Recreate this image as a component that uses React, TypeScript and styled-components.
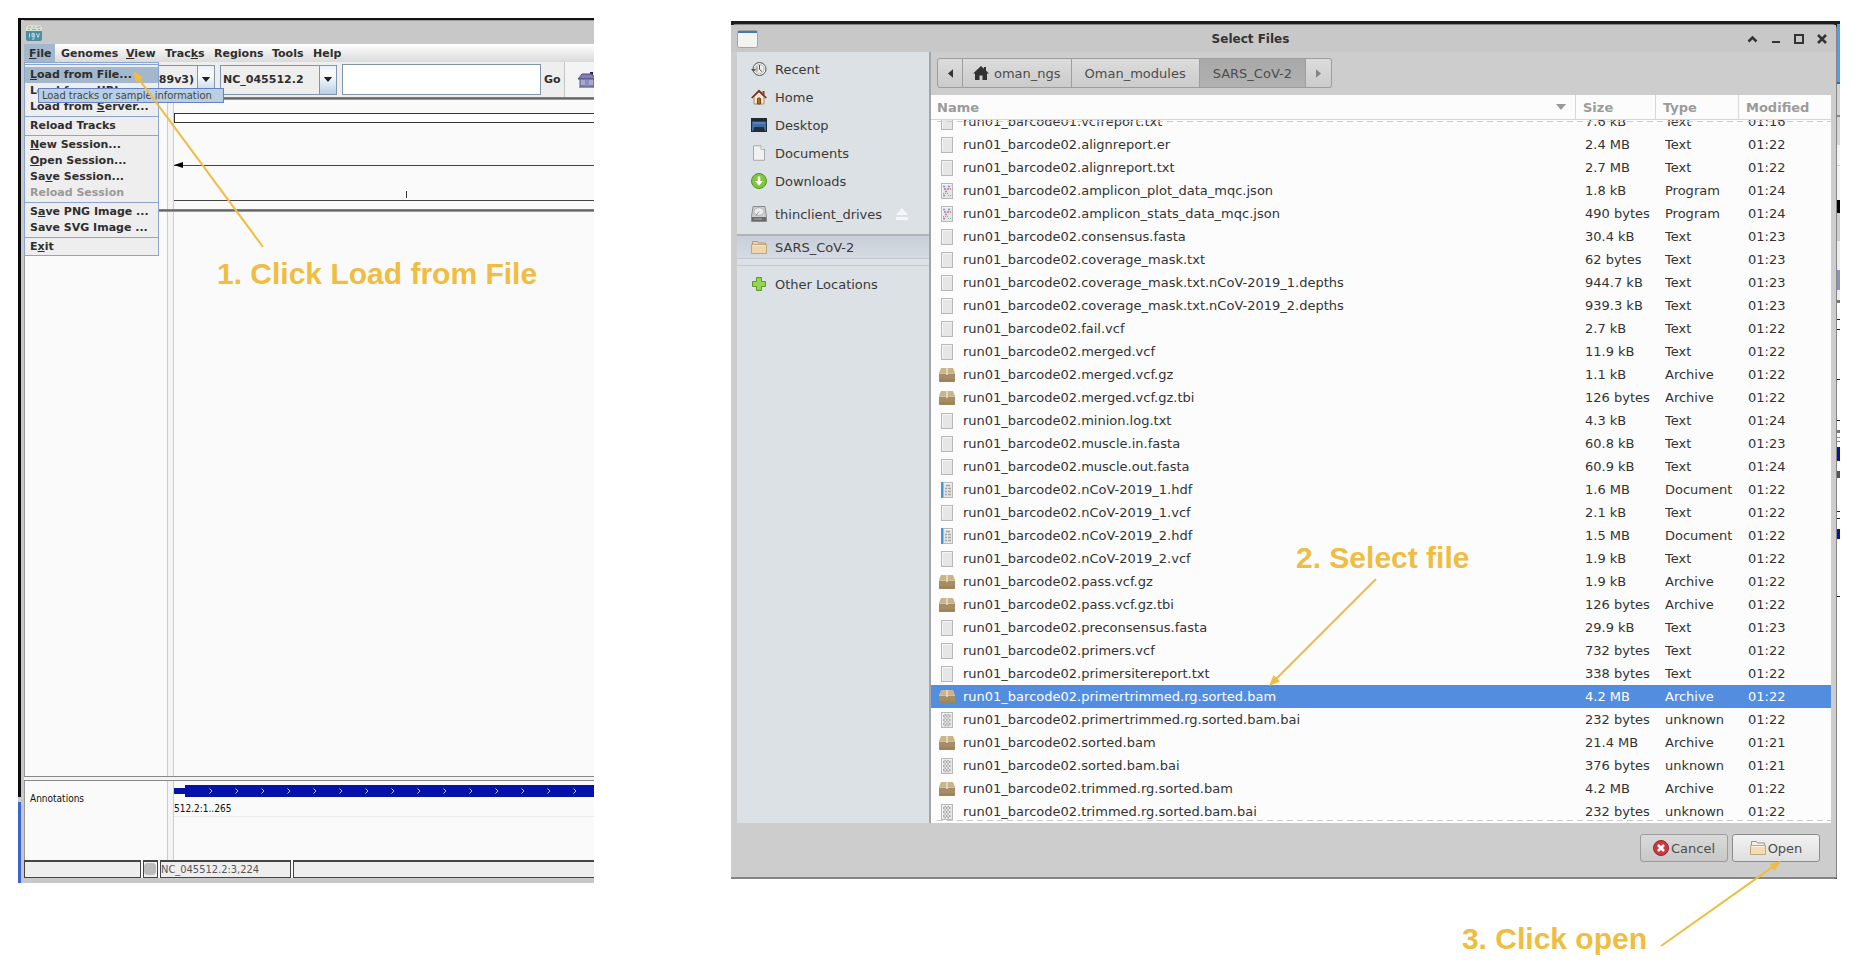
import React from "react";
import styled, { createGlobalStyle } from "styled-components";

const Global = createGlobalStyle`
  *, *::before, *::after { box-sizing: border-box; }
  body { margin: 0; background: #fff; }
  button, input, select { font: inherit; color: inherit; margin: 0; }
`;

const ui = `"DejaVu Sans", "Liberation Sans", sans-serif`;
const uiNarrow = `"DejaVu Sans Condensed", "DejaVu Sans", sans-serif`;
const accent = "#efbd41";

/* ---------- page ---------- */

const Page = styled.main`
  display: grid;
  grid-template-columns: minmax(0, 576fr) minmax(0, 1109fr);
  column-gap: 137px;
  align-items: start;
  padding: 18px 20px 81px 18px;
  font-family: ${ui};
`;

const Shot = styled.section<{ $drop?: number }>`
  position: relative;
  display: flex;
  margin-top: ${(p) => p.$drop ?? 0}px;
`;

const Callout = styled.p`
  position: absolute;
  margin: 0;
  font: bold 30px/34px "Liberation Sans", Arial, sans-serif;
  color: ${accent};
  white-space: nowrap;
  z-index: 5;
`;
const LoadCallout = styled(Callout)`
  left: 199px;
  top: 239px;
`;
const SelectCallout = styled(Callout)`
  left: 565px;
  top: 520px;
`;
const OpenCallout = styled(Callout)`
  right: 193px;
  top: 901px;
`;

const ArrowSvg = styled.svg`
  position: absolute;
  z-index: 6;
  pointer-events: none;
  overflow: visible;
`;
const LoadArrow = styled(ArrowSvg)`
  left: 114px;
  top: 52px;
`;
const SelectArrow = styled(ArrowSvg)`
  left: 538px;
  top: 558px;
`;
const OpenArrow = styled(ArrowSvg)`
  right: 59px;
  top: 840px;
`;

/* Line from (x1,y1) with a filled head whose tip is at (x2,y2). */
function ArrowShape({ x1, y1, x2, y2 }: { x1: number; y1: number; x2: number; y2: number }) {
  const a = (Math.atan2(y2 - y1, x2 - x1) * 180) / Math.PI;
  return (
    <g>
      <line x1={x1} y1={y1} x2={x2 - (x2 - x1) * 0.04} y2={y2 - (y2 - y1) * 0.04} stroke={accent} strokeWidth="2" />
      <path d="M0 0L-11 4.500V-4.500Z" fill={accent} transform={`translate(${x2} ${y2}) rotate(${a})`} />
    </g>
  );
}

/* ---------- genome viewer window ---------- */

const DesktopEdge = styled.div`
  flex: 0 0 3px;
  background: linear-gradient(#0a0a0a 779px, #ccc 779px, #ccc 784px, #3a66d0 784px);
`;

const Viewer = styled.div`
  flex: 1;
  min-width: 0;
  display: flex;
  flex-direction: column;
  border-top: 2px solid #111;
  background: #c8c8c8;
  padding: 0 0 5px 3px;
`;

const ViewerTitle = styled.div`
  height: 24px;
  display: flex;
  align-items: center;
  padding: 0 2px;
  border-top: 1px solid #9a9a9a;
`;

const MenuBar = styled.nav`
  height: 18px;
  display: flex;
  background: linear-gradient(#fff, #dadada);
  font-size: 11px;
  font-weight: bold;
  color: #2e2e2e;
`;

const MenuSlot = styled.div<{ $w: number }>`
  position: relative;
  flex: 0 0 ${(p) => p.$w}px;
`;

const MenuTitle = styled.button<{ $open?: boolean }>`
  display: block;
  height: 18px;
  width: ${(p) => (p.$open ? "31px" : "auto")};
  border: 0;
  padding: 0 0 0 5px;
  text-align: left;
  white-space: nowrap;
  background: ${(p) => (p.$open ? "#a3b8cc" : "transparent")};
`;

const Menu = styled.div`
  position: absolute;
  left: 0;
  top: 18px;
  width: 135px;
  z-index: 3;
  border: 1px solid #8ba4d6;
  background: #eee;
  padding-top: 1px;
  &::before {
    content: "";
    display: block;
    border-top: 1px solid #8ba4d6;
    margin-bottom: 2px;
  }
`;

const MenuGroup = styled.div`
  & + & {
    padding-top: 1px;
    margin-top: 1px;
    border-top: 1px solid #8ba4d6;
  }
`;

const MenuItem = styled.button<{ $active?: boolean }>`
  position: relative;
  display: block;
  width: 100%;
  height: 16px;
  line-height: 16px;
  padding: 0 0 0 5px;
  border: 0;
  text-align: left;
  white-space: nowrap;
  background: ${(p) => (p.$active ? "#a3b8cc" : "transparent")};
  &:disabled {
    color: #999;
  }
`;

const Tip = styled.span`
  position: absolute;
  z-index: 4;
  left: 13px;
  top: 21px;
  width: 186px;
  height: 15px;
  padding-left: 3px;
  border: 1px solid #6382bf;
  background: #b8cfe5;
  font: normal 11px/13px ${uiNarrow};
  color: #444;
  white-space: nowrap;
`;

const Toolbar = styled.div`
  height: 35px;
  display: flex;
  align-items: center;
  gap: 5px;
  background: #eee;
  font-size: 11px;
  font-weight: bold;
  color: #2e2e2e;
  overflow: hidden;
`;

const Combo = styled.div<{ $w: number }>`
  flex: 0 0 ${(p) => p.$w}px;
  height: 30px;
  display: flex;
  border: 1px solid #8296ab;
`;

const ComboSelect = styled.select<{ $end?: boolean }>`
  appearance: none;
  flex: 1;
  min-width: 0;
  border: 0;
  background: #eee;
  padding: 0 3px 0 2px;
  text-align-last: ${(p) => (p.$end ? "right" : "left")};
`;

const ComboArrow = styled.span`
  flex: 0 0 17px;
  display: grid;
  place-items: center;
  border-left: 1px solid #8296ab;
  background: linear-gradient(#e8f0f8, #fff 30%, #b8cfe5);
`;

const Locus = styled.input`
  flex: 0 0 199px;
  height: 31px;
  border: 1px solid #8296ab;
  background: #fff;
`;

const GoButton = styled.button`
  flex: 0 0 20px;
  border: 0;
  padding: 0;
  margin: 0 -5px 0 -2px;
  background: none;
  text-align: left;
`;

const HomeCell = styled.button`
  flex: 1;
  height: 35px;
  border: 0;
  border-left: 1px solid #c4c4c4;
  padding: 0 0 0 12px;
  display: flex;
  align-items: center;
  background: #f4f4f4;
`;

const Splitter = styled.div`
  height: 3px;
  background: linear-gradient(#999, #666 1px, #666 2px, #999 2px);
`;

const SoftSplitter = styled.div`
  height: 5px;
  background: #f4f4f4;
  border-top: 1px solid #888;
  border-bottom: 1px solid #888;
`;

const Tracks = styled.div<{ $h: number }>`
  height: ${(p) => p.$h}px;
  display: flex;
  background: #fafafa;
  border-left: 1px solid #999;
`;

const TrackNames = styled.div`
  flex: 0 0 143px;
  border-right: 1px solid #ccc;
  padding: 11px 0 0 5px;
  font: 10px/14px ${uiNarrow};
  color: #111;
`;

const Gutter = styled.div`
  flex: 0 0 5px;
  background: #f4f4f4;
`;

const TrackData = styled.div`
  flex: 1;
  min-width: 0;
  border-left: 1px solid #ccc;
  overflow: hidden;
  & > svg {
    display: block;
  }
`;

const FeatureLabel = styled.div`
  font: 10px/14px ${uiNarrow};
  color: #111;
  height: 20px;
  padding-top: 5px;
  border-bottom: 1px solid #ececec;
`;

const StatusBar = styled.div`
  height: 18px;
  display: flex;
  gap: 2px;
  background: #fafafa;
`;

const StatusCell = styled.div<{ $w?: number }>`
  flex: ${(p) => (p.$w ? `0 0 ${p.$w}px` : "1")};
  border: 1px solid #444;
  border-top-width: 2px;
  border-right-width: ${(p) => (p.$w ? 1 : 0)}px;
  background: #eee;
  font: 11px/15px ${uiNarrow};
  color: #555;
  overflow: hidden;
`;

const Lamp = styled.span`
  display: block;
  width: 12px;
  height: 12px;
  margin-top: 1px;
  border-radius: 4px;
  background: #bbb;
`;

/* ---------- file dialog ---------- */

const Dialog = styled.div`
  flex: 1;
  min-width: 0;
  display: flex;
  flex-direction: column;
  border: solid #858585;
  border-width: 1px 1px 2px 0;
  border-radius: 5px 5px 2px 0;
  background: #cdcdcd;
  color: #3a3a3a;
  font-size: 13px;
`;

const DialogColumn = styled.div`
  flex: 1;
  min-width: 0;
  display: flex;
  flex-direction: column;
`;

const ShotBody = styled.div`
  flex: 1;
  min-width: 0;
  display: flex;
  border-top: 3px solid #1c1f1c;
  background: #1c1f1c;
`;

const line = (y: number, h: number, c: string) => `transparent ${y}px, ${c} ${y}px, ${c} ${y + h}px, transparent ${y + h}px`;

const BehindEdge = styled.div`
  flex: 0 0 3px;
  background: linear-gradient(
      ${[
        line(58, 2, "#2f6fae"),
        line(91, 2, "#888"),
        line(141, 1, "#ccc"),
        line(176, 13, "#000"),
        line(246, 20, "#8d90c4"),
        line(276, 3, "#777"),
        line(295, 1, "#222"),
        line(305, 1, "#222"),
        line(355, 1, "#222"),
        line(396, 1, "#222"),
        line(406, 3, "#777"),
        line(413, 1, "#888"),
        line(417, 1, "#888"),
        line(423, 14, "#0514a8"),
        line(447, 7, "#555"),
        line(487, 1, "#222"),
        line(494, 1, "#222"),
        line(505, 10, "#0514a8"),
        line(572, 1, "#222"),
      ].join(", ")}
    ),
    linear-gradient(#4a9ff2 60px, #d2d2d2 60px, #d8d8d8 121px, #f4f4f4 121px, #f4f4f4 176px, #cfcfcf 176px, #cfcfcf 217px, #eee 217px, #eee 276px, #fff 276px);
`;

const DialogTitle = styled.header`
  height: 27px;
  display: flex;
  align-items: center;
  padding: 0 3px 0 6px;
  background: #c8c8c8;
`;

const TitleText = styled.h1`
  flex: 1;
  margin: 0;
  padding-left: 2px;
  text-align: center;
  font-size: 12px;
  line-height: 16px;
  color: #333;
`;

const WindowButton = styled.button`
  width: 23px;
  height: 24px;
  padding: 0;
  border: 0;
  background: none;
  display: grid;
  place-items: center;
`;

const DialogBody = styled.div`
  display: flex;
  padding: 0 5px 0 6px;
`;

const Places = styled.nav`
  flex: 0 0 194px;
  padding-top: 3px;
  background: #dce1e5;
  border-right: 2px solid #a3a6a8;
`;

const PlaceGroup = styled.div<{ $kind?: "drive" | "mark" }>`
  padding: ${(p) => (p.$kind === "drive" ? "5px 0 6px" : "0")};
  ${(p) =>
    p.$kind === "mark" &&
    `border-top: 2px solid #b0b3b8;
     border-bottom: 1px solid #c3c8cf;
     background: linear-gradient(#c8cfd9, #d5dbe3);
     height: 25px;
     display: flex;
     align-items: center;`}
`;

const PlaceGap = styled.div`
  height: 7px;
  border-bottom: 1px solid #c3c8cf;
  margin-bottom: 4px;
`;

const Place = styled.button`
  width: 100%;
  height: 28px;
  display: flex;
  align-items: center;
  gap: 8px;
  padding: 0 20px 0 14px;
  border: 0;
  background: none;
  text-align: left;
  white-space: nowrap;
`;

const PlaceLabel = styled.span`
  flex: 1;
`;

const Files = styled.div`
  flex: 1;
  min-width: 0;
  display: flex;
  flex-direction: column;
`;

const PathRow = styled.div`
  height: 43px;
  display: flex;
  padding: 6px 6px 7px;
`;

const PathButton = styled.button<{ $current?: boolean; $home?: boolean; $end?: "left" | "right" }>`
  display: flex;
  align-items: center;
  justify-content: center;
  gap: 5px;
  width: ${(p) => (p.$end ? "26px" : "auto")};
  padding: 0 ${(p) => (p.$end ? 0 : p.$home ? 10 : 13)}px;
  border: 1px solid #9d9d9d;
  border-left-width: ${(p) => (p.$end === "left" ? 1 : 0)}px;
  border-radius: ${(p) => (p.$end === "left" ? "3px 0 0 3px" : p.$end === "right" ? "0 3px 3px 0" : "0")};
  background: ${(p) => (p.$current ? "linear-gradient(#a8a8a8, #b2b2b2)" : "linear-gradient(#dcdcdc, #cbcbcb)")};
  color: #4c4c4c;
  white-space: nowrap;
`;

const List = styled.div`
  position: relative;
  background: #fcfcfc;
  &::before,
  &::after {
    content: "";
    position: absolute;
    left: 6px;
    right: 0;
    height: 1px;
    background: repeating-linear-gradient(90deg, #ccc 0, #ccc 6px, transparent 6px, transparent 10px);
  }
  &::before {
    top: 26px;
  }
  &::after {
    bottom: 2px;
  }
`;

const Table = styled.table`
  width: 100%;
  table-layout: fixed;
  border-collapse: separate;
  border-spacing: 0;
`;

const Col = styled.col<{ $w?: number }>`
  width: ${(p) => (p.$w ? `${p.$w}px` : "auto")};
`;

const Th = styled.th`
  height: 25px;
  padding: 0 0 0 6px;
  text-align: left;
  line-height: 23px;
  color: #9b9b9b;
  border-bottom: 1px solid #d4d4d4;
  & + & {
    padding-left: 7px;
    border-left: 1px solid #d8d8d8;
  }
`;

const ThInner = styled.span`
  display: flex;
  align-items: center;
  justify-content: space-between;
  padding-right: 9px;
`;

const Row = styled.tr<{ $selected?: boolean }>`
  background: ${(p) => (p.$selected ? "#528de0" : "transparent")};
  color: ${(p) => (p.$selected ? "#fff" : "#333")};
`;

const Td = styled.td`
  padding: 0 0 0 8px;
  white-space: nowrap;
  & + & {
    padding-left: 10px;
  }
`;

/* A row partly scrolled under the header shows only its lower part. */
const Cell = styled.div<{ $cut?: boolean }>`
  height: ${(p) => (p.$cut ? 13 : 23)}px;
  display: flex;
  align-items: flex-end;
  overflow: hidden;
`;

const CellLine = styled.div`
  flex: 1;
  height: 23px;
  display: flex;
  align-items: center;
  gap: 8px;
`;

const Footer = styled.footer`
  height: 54px;
  display: flex;
  justify-content: flex-end;
  align-items: flex-start;
  gap: 4px;
  padding: 11px 16px 0 0;
`;

const ActionButton = styled.button<{ $primary?: boolean }>`
  width: 88px;
  height: 28px;
  display: flex;
  align-items: center;
  justify-content: center;
  gap: 2px;
  padding: 0;
  border: 1px solid ${(p) => (p.$primary ? "#8c8c8c" : "#9d9d9d")};
  border-radius: 3px;
  background: ${(p) => (p.$primary ? "linear-gradient(#f2f2f2, #dedede)" : "linear-gradient(#dadada, #c8c8c8)")};
  color: #4c4c4c;
`;

/* ---------- icons ---------- */

const ViewerLogo = () => (
  <svg width="16" height="16" viewBox="0 0 16 16" aria-hidden="true">
    <rect width="16" height="16" rx="2" fill="#4d8ea3" />
    <path d="M0 2q0-2 2-2h12q2 0 2 2v4H0z" fill="#d3e0dc" />
    <path d="M2 2h3M7 2h2M11 2h3" stroke="#d8a05e" />
    <path d="M2 4.500h2M6 4.500h4M12 4.500h2" stroke="#8bbcab" />
    <path d="M3.500 8.500v4M8 8.500H6v3h2v-3V14H6M10.500 8.500l1.500 4 1.500-4" stroke="#c4dde6" fill="none" />
  </svg>
);

const HouseIcon = () => (
  <svg width="20" height="17" viewBox="0 0 20 17" aria-hidden="true">
    <path d="M13 1h3v5h-3z" fill="#22204a" />
    <path d="M1 8L5 3h10l4 5z" fill="#8280b4" stroke="#4a4880" />
    <path d="M3 8h14v7H3z" fill="#a7a6d2" stroke="#55538c" />
    <path d="M8 9h4v6H8z" fill="#8d8bc0" />
    <path d="M2 16h16" stroke="#3f3d70" />
  </svg>
);

const Down = ({ w, h, c }: { w: number; h: number; c: string }) => (
  <svg width={w} height={h} viewBox="0 0 10 6" aria-hidden="true">
    <path d="M0 0h10L5 6z" fill={c} />
  </svg>
);

const Svg16 = ({ children }: { children: React.ReactNode }) => (
  <svg width="16" height="16" viewBox="0 0 16 16" fill="none" aria-hidden="true">
    {children}
  </svg>
);

const FolderIcon = () => (
  <Svg16>
    <path d="M1.500 13V1.500h5L7.500 3h7v10z" fill="#f4f1ea" stroke="#98928a" />
    <path d="M.5 5.500h15v9H.5z" fill="#f2dcb3" stroke="#bfa67b" />
    <path d="M1.500 6.500h13" stroke="#fdf5e2" />
  </Svg16>
);

const placeIcons: Record<string, React.ReactNode> = {
  recent: (
    <Svg16>
      <circle cx="8.500" cy="8" r="6.500" fill="#efefec" stroke="#555" />
      <circle cx="8.500" cy="8" r="4.500" stroke="#bbb" />
      <path d="M8.500 4v4.500l2.500 2" stroke="#555" />
      <path d="M0 8h5L2.500 11z" fill="#555" />
      <path d="M6 5.500v5" stroke="#777" />
    </Svg16>
  ),
  home: (
    <Svg16>
      <path d="M3 7.500L8 3l5 4.500V15H3z" fill="#f3e6cf" stroke="#a7906c" />
      <path d="M11.500 2h2v4l-2-2z" fill="#8a3a2a" />
      <path d="M.7 9L8 1.800 15.300 9" stroke="#7c2f22" strokeWidth="1.700" />
      <path d="M6.500 15V9.500q1.500-1.300 3 0V15z" fill="#b0662c" stroke="#7a4418" />
    </Svg16>
  ),
  desktop: (
    <Svg16>
      <rect x=".5" y="1.500" width="15" height="13" fill="#3c6ea5" stroke="#1c2c3c" />
      <path d="M1 2h14v2.500H1z" fill="#22272c" />
      <path d="M3.500 10h9l1.500 4H2z" fill="#23303c" />
      <path d="M2 6h12" stroke="#6f9ccb" />
    </Svg16>
  ),
  documents: (
    <Svg16>
      <path d="M2.500.8h7.500l3.500 3.500v11h-11z" fill="#f1f1f1" stroke="#a9a9a9" />
      <path d="M10 .8v3.500h3.500" fill="#fff" stroke="#a9a9a9" />
    </Svg16>
  ),
  downloads: (
    <Svg16>
      <circle cx="8" cy="8" r="7.500" fill="#82c541" stroke="#569423" />
      <path d="M6.700 3.500h2.600V8H12l-4 4.500L4 8h2.700z" fill="#fff" />
    </Svg16>
  ),
  drive: (
    <Svg16>
      <path d="M2 .5h12l1.500 10v5H.5v-5z" fill="#cfcfcf" stroke="#8a8a8a" />
      <ellipse cx="8" cy="5.500" rx="5" ry="3.800" fill="#ececec" stroke="#b2b2b2" />
      <path d="M4.500 10L8 5.500" stroke="#999" />
      <rect x="1" y="11" width="14" height="4" fill="#6a6a6a" />
      <path d="M3 13h8" stroke="#aaa" />
    </Svg16>
  ),
  folder: (
    <Svg16>
      <path d="M1.500 13V2.500h5L7.500 4h7v9z" fill="#e6d3b2" stroke="#b39b75" />
      <path d="M.5 5.500h15v9H.5z" fill="#eed5ab" stroke="#bfa67b" />
      <path d="M1.500 6.500h13" stroke="#f8e8cb" />
    </Svg16>
  ),
  plus: (
    <Svg16>
      <path d="M5.500 1.500h5v4h4v5h-4v4h-5v-4h-4v-5h4z" fill="#96d552" stroke="#5c9a28" />
    </Svg16>
  ),
};

const SheetBase = ({ children }: { children?: React.ReactNode }) => (
  <Svg16>
    <rect x="2.500" y=".5" width="11" height="15" fill="#e6e6e6" stroke="#b8b8b8" />
    <path d="M3.500 14V1.500h9" stroke="#f6f6f6" />
    {children}
  </Svg16>
);

const fileIcons: Record<string, React.ReactNode> = {
  Text: <SheetBase />,
  Program: (
    <SheetBase>
      <path d="M4 3.500h3M9 3.500h2M6 8.500h3" stroke="#6f9fd0" strokeWidth="1.500" strokeDasharray="2 1" />
      <path d="M5 6h2M8 6h4M4 12.500h3" stroke="#d06a90" strokeWidth="1.500" strokeDasharray="2 1" />
      <path d="M4 10.500h5M9 12.500h3" stroke="#7fae86" strokeDasharray="1 1" />
    </SheetBase>
  ),
  Document: (
    <SheetBase>
      <path d="M2 0h3v16H2z" fill="#4c93dc" />
      <path d="M4.500 0v16" stroke="#8fc0ee" />
      <path d="M7 3.500h4M6 6.500h2M9 6.500h3M6 9.500h2M9 9.500h3M6 12.500h2M9 12.500h3" stroke="#a5a5a5" strokeWidth="1.500" />
    </SheetBase>
  ),
  Archive: (
    <Svg16>
      <path d="M0 6h16v8q0 1-1 1H1q-1 0-1-1z" fill="#a78d65" />
      <path d="M0 12h16v2q0 1-1 1H1q-1 0-1-1z" fill="#97804f" opacity=".6" />
      <path d="M2 1h12l2 5H0z" fill="#c9b48c" />
      <path d="M0 6.500h16" stroke="#d3c19c" />
      <path d="M8 1v7" stroke="#ebe0c8" strokeWidth="1.500" />
    </Svg16>
  ),
  unknown: (
    <SheetBase>
      <path d="M4 4h8M4 8h8M4 12h8" stroke="#999" strokeWidth="1.500" strokeDasharray="1.500 1.500" />
      <path d="M5.500 2.500h6M5.500 6h6M5.500 10h6M5.500 13.500h6" stroke="#aaa" strokeWidth="1.500" strokeDasharray="1.500 1.500" />
    </SheetBase>
  ),
};

const Eject = () => (
  <svg width="14" height="12" viewBox="0 0 14 12" aria-hidden="true">
    <path d="M7 0l6 7H1z" fill="#f4f6f8" />
    <path d="M1 9h12v3H1z" fill="#f4f6f8" />
  </svg>
);

/* ---------- data ---------- */

type FileRow = [name: string, size: string, kind: string, time: string];

const files: FileRow[] = [
  ["run01_barcode01.vcfreport.txt", "7.6 kB", "Text", "01:16"],
  ["run01_barcode02.alignreport.er", "2.4 MB", "Text", "01:22"],
  ["run01_barcode02.alignreport.txt", "2.7 MB", "Text", "01:22"],
  ["run01_barcode02.amplicon_plot_data_mqc.json", "1.8 kB", "Program", "01:24"],
  ["run01_barcode02.amplicon_stats_data_mqc.json", "490 bytes", "Program", "01:24"],
  ["run01_barcode02.consensus.fasta", "30.4 kB", "Text", "01:23"],
  ["run01_barcode02.coverage_mask.txt", "62 bytes", "Text", "01:23"],
  ["run01_barcode02.coverage_mask.txt.nCoV-2019_1.depths", "944.7 kB", "Text", "01:23"],
  ["run01_barcode02.coverage_mask.txt.nCoV-2019_2.depths", "939.3 kB", "Text", "01:23"],
  ["run01_barcode02.fail.vcf", "2.7 kB", "Text", "01:22"],
  ["run01_barcode02.merged.vcf", "11.9 kB", "Text", "01:22"],
  ["run01_barcode02.merged.vcf.gz", "1.1 kB", "Archive", "01:22"],
  ["run01_barcode02.merged.vcf.gz.tbi", "126 bytes", "Archive", "01:22"],
  ["run01_barcode02.minion.log.txt", "4.3 kB", "Text", "01:24"],
  ["run01_barcode02.muscle.in.fasta", "60.8 kB", "Text", "01:23"],
  ["run01_barcode02.muscle.out.fasta", "60.9 kB", "Text", "01:24"],
  ["run01_barcode02.nCoV-2019_1.hdf", "1.6 MB", "Document", "01:22"],
  ["run01_barcode02.nCoV-2019_1.vcf", "2.1 kB", "Text", "01:22"],
  ["run01_barcode02.nCoV-2019_2.hdf", "1.5 MB", "Document", "01:22"],
  ["run01_barcode02.nCoV-2019_2.vcf", "1.9 kB", "Text", "01:22"],
  ["run01_barcode02.pass.vcf.gz", "1.9 kB", "Archive", "01:22"],
  ["run01_barcode02.pass.vcf.gz.tbi", "126 bytes", "Archive", "01:22"],
  ["run01_barcode02.preconsensus.fasta", "29.9 kB", "Text", "01:23"],
  ["run01_barcode02.primers.vcf", "732 bytes", "Text", "01:22"],
  ["run01_barcode02.primersitereport.txt", "338 bytes", "Text", "01:22"],
  ["run01_barcode02.primertrimmed.rg.sorted.bam", "4.2 MB", "Archive", "01:22"],
  ["run01_barcode02.primertrimmed.rg.sorted.bam.bai", "232 bytes", "unknown", "01:22"],
  ["run01_barcode02.sorted.bam", "21.4 MB", "Archive", "01:21"],
  ["run01_barcode02.sorted.bam.bai", "376 bytes", "unknown", "01:21"],
  ["run01_barcode02.trimmed.rg.sorted.bam", "4.2 MB", "Archive", "01:22"],
  ["run01_barcode02.trimmed.rg.sorted.bam.bai", "232 bytes", "unknown", "01:22"],
];
const selectedFile = "run01_barcode02.primertrimmed.rg.sorted.bam";

const places = [
  ["recent", "Recent"],
  ["home", "Home"],
  ["desktop", "Desktop"],
  ["documents", "Documents"],
  ["downloads", "Downloads"],
];

/* ---------- parts ---------- */

function FileMenu() {
  return (
    <Menu>
      <MenuGroup>
        <MenuItem $active>
          <u>L</u>oad from File...
          <Tip role="tooltip">Load tracks or sample information</Tip>
        </MenuItem>
        <MenuItem>Load from URL...</MenuItem>
        <MenuItem>
          Load from <u>S</u>erver...
        </MenuItem>
      </MenuGroup>
      <MenuGroup>
        <MenuItem>Reload Tracks</MenuItem>
      </MenuGroup>
      <MenuGroup>
        <MenuItem>
          <u>N</u>ew Session...
        </MenuItem>
        <MenuItem>
          <u>O</u>pen Session...
        </MenuItem>
        <MenuItem>
          Sa<u>v</u>e Session...
        </MenuItem>
        <MenuItem disabled>Reload Session</MenuItem>
      </MenuGroup>
      <MenuGroup>
        <MenuItem>
          S<u>a</u>ve PNG Image ...
        </MenuItem>
        <MenuItem>Save SVG Image ...</MenuItem>
      </MenuGroup>
      <MenuGroup>
        <MenuItem>
          E<u>x</u>it
        </MenuItem>
      </MenuGroup>
    </Menu>
  );
}

function GenomeViewer() {
  return (
    <Viewer>
      <ViewerTitle>
        <ViewerLogo />
      </ViewerTitle>
      <MenuBar>
        <MenuSlot $w={32}>
          <MenuTitle $open>
            <u>F</u>ile
          </MenuTitle>
          <FileMenu />
        </MenuSlot>
        <MenuSlot $w={65}>
          <MenuTitle>Genomes</MenuTitle>
        </MenuSlot>
        <MenuSlot $w={39}>
          <MenuTitle>
            <u>V</u>iew
          </MenuTitle>
        </MenuSlot>
        <MenuSlot $w={49}>
          <MenuTitle>
            Trac<u>k</u>s
          </MenuTitle>
        </MenuSlot>
        <MenuSlot $w={58}>
          <MenuTitle>Regions</MenuTitle>
        </MenuSlot>
        <MenuSlot $w={41}>
          <MenuTitle>Tools</MenuTitle>
        </MenuSlot>
        <MenuSlot $w={40}>
          <MenuTitle>Help</MenuTitle>
        </MenuSlot>
      </MenuBar>
      <Toolbar>
        <Combo $w={191}>
          <ComboSelect $end aria-label="Genome">
            <option>(ASM985889v3)</option>
          </ComboSelect>
          <ComboArrow>
            <Down w={10} h={5} c="#222" />
          </ComboArrow>
        </Combo>
        <Combo $w={117}>
          <ComboSelect aria-label="Chromosome">
            <option>NC_045512.2</option>
          </ComboSelect>
          <ComboArrow>
            <Down w={10} h={5} c="#222" />
          </ComboArrow>
        </Combo>
        <Locus aria-label="Locus" />
        <GoButton>Go</GoButton>
        <HomeCell aria-label="Whole genome">
          <HouseIcon />
        </HomeCell>
      </Toolbar>
      <Splitter />
      <Tracks $h={109}>
        <TrackNames />
        <Gutter />
        <TrackData>
          <svg width="100%" height="109" shapeRendering="crispEdges" aria-hidden="true">
            <rect x="0" y="13" width="110%" height="9" fill="#fff" stroke="#333" />
            <line x1="0" y1="65" x2="100%" y2="65" stroke="#444" />
            <path d="M0 65l9-3v6z" fill="#000" shapeRendering="auto" />
            <line x1="0" y1="100" x2="100%" y2="100" stroke="#444" />
            <line x1="232" y1="91" x2="232" y2="98" stroke="#333" />
          </svg>
        </TrackData>
      </Tracks>
      <Splitter />
      <Tracks $h={564}>
        <TrackNames />
        <Gutter />
        <TrackData />
      </Tracks>
      <SoftSplitter />
      <Tracks $h={79}>
        <TrackNames>Annotations</TrackNames>
        <Gutter />
        <TrackData>
          <svg width="100%" height="16" aria-hidden="true">
            <defs>
              <pattern id="strand" x="24" y="0" width="26" height="16" patternUnits="userSpaceOnUse">
                <path d="M11.500 7.500l2.500 2.500-2.500 2.500" fill="none" stroke="#c4caf0" />
              </pattern>
            </defs>
            <rect x="0" y="7" width="12" height="6" fill="#0511ab" />
            <rect x="11" y="4" width="100%" height="12" fill="#0511ab" />
            <rect x="24" y="0" width="100%" height="16" fill="url(#strand)" />
          </svg>
          <FeatureLabel>512.2:1..265</FeatureLabel>
        </TrackData>
      </Tracks>
      <StatusBar>
        <StatusCell $w={117} />
        <StatusCell $w={15}>
          <Lamp />
        </StatusCell>
        <StatusCell $w={131}>NC_045512.2:3,224</StatusCell>
        <StatusCell />
      </StatusBar>
    </Viewer>
  );
}

function FileDialog() {
  return (
    <Dialog role="dialog" aria-label="Select Files">
      <DialogTitle>
        <svg width="21" height="18" viewBox="0 0 21 18" aria-hidden="true">
          <rect x=".5" y=".5" width="20" height="17" rx="2" fill="#f3f3ef" stroke="#a5a5a5" />
          <path d="M1 1h19v2H1z" fill="#4a73b4" />
        </svg>
        <TitleText>Select Files</TitleText>
        <WindowButton aria-label="Roll up">
          <svg width="11" height="8" viewBox="0 0 11 8">
            <path d="M1.500 6.500l4-4 4 4" fill="none" stroke="#333" strokeWidth="2.500" />
          </svg>
        </WindowButton>
        <WindowButton aria-label="Minimize">
          <svg width="10" height="8" viewBox="0 0 10 8">
            <path d="M1 7h8" stroke="#333" strokeWidth="2" />
          </svg>
        </WindowButton>
        <WindowButton aria-label="Maximize">
          <svg width="10" height="10" viewBox="0 0 10 10">
            <rect x="1" y="1" width="8" height="8" fill="none" stroke="#333" strokeWidth="2" />
          </svg>
        </WindowButton>
        <WindowButton aria-label="Close">
          <svg width="10" height="10" viewBox="0 0 10 10">
            <path d="M1 1l8 8M9 1L1 9" stroke="#333" strokeWidth="2.500" />
          </svg>
        </WindowButton>
      </DialogTitle>
      <DialogBody>
        <Places>
          {places.map(([icon, label]) => (
            <Place key={label}>
              {placeIcons[icon]}
              <PlaceLabel>{label}</PlaceLabel>
            </Place>
          ))}
          <PlaceGroup $kind="drive">
            <Place>
              {placeIcons.drive}
              <PlaceLabel>thinclient_drives</PlaceLabel>
              <Eject />
            </Place>
          </PlaceGroup>
          <PlaceGroup $kind="mark">
            <Place>
              {placeIcons.folder}
              <PlaceLabel>SARS_CoV-2</PlaceLabel>
            </Place>
          </PlaceGroup>
          <PlaceGap />
          <Place>
            {placeIcons.plus}
            <PlaceLabel>Other Locations</PlaceLabel>
          </Place>
        </Places>
        <Files>
          <PathRow>
            <PathButton $end="left" aria-label="Back">
              <svg width="5" height="9" viewBox="0 0 6 10">
                <path d="M6 0v10L0 5z" fill="#333" />
              </svg>
            </PathButton>
            <PathButton $home>
              <svg width="16" height="14" viewBox="0 0 16 14" aria-hidden="true">
                <path d="M8 0l3 2.700V1h2v3.500L16 7.500h-2V14H9.500V9.500h-3V14H2V7.500H0z" fill="#333" />
              </svg>
              oman_ngs
            </PathButton>
            <PathButton>Oman_modules</PathButton>
            <PathButton $current>SARS_CoV-2</PathButton>
            <PathButton $end="right" aria-label="Forward">
              <svg width="5" height="9" viewBox="0 0 6 10">
                <path d="M0 0v10l6-5z" fill="#858585" />
              </svg>
            </PathButton>
          </PathRow>
          <List>
            <Table>
              <colgroup>
                <Col />
                <Col $w={80} />
                <Col $w={83} />
                <Col $w={93} />
              </colgroup>
              <thead>
                <tr>
                  <Th scope="col">
                    <ThInner>
                      Name
                      <Down w={10} h={6} c="#999" />
                    </ThInner>
                  </Th>
                  <Th scope="col">Size</Th>
                  <Th scope="col">Type</Th>
                  <Th scope="col">Modified</Th>
                </tr>
              </thead>
              <tbody>
                {files.map(([name, size, kind, time], i) => (
                  <Row key={name} $selected={name === selectedFile}>
                    <Td>
                      <Cell $cut={i === 0}>
                        <CellLine>
                          {fileIcons[kind]}
                          {name}
                        </CellLine>
                      </Cell>
                    </Td>
                    {[size, kind, time].map((value) => (
                      <Td key={value}>
                        <Cell $cut={i === 0}>
                          <CellLine>{value}</CellLine>
                        </Cell>
                      </Td>
                    ))}
                  </Row>
                ))}
              </tbody>
            </Table>
          </List>
        </Files>
      </DialogBody>
      <Footer>
        <ActionButton>
          <Svg16>
            <circle cx="8" cy="8" r="7.500" fill="#c93a3f" stroke="#9d2228" />
            <path d="M5 5l6 6M11 5l-6 6" stroke="#fff" strokeWidth="2.500" />
          </Svg16>
          Cancel
        </ActionButton>
        <ActionButton $primary>
          <FolderIcon />
          Open
        </ActionButton>
      </Footer>
    </Dialog>
  );
}

export default function App() {
  return (
    <>
      <Global />
      <Page>
        <Shot>
          <DesktopEdge />
          <GenomeViewer />
          <LoadCallout>1. Click Load from File</LoadCallout>
          <LoadArrow width="132" height="178" aria-hidden="true">
            <ArrowShape x1={131} y1={177} x2={1} y2={1} />
          </LoadArrow>
        </Shot>
        <Shot $drop={3}>
          <ShotBody>
            <DialogColumn>
              <FileDialog />
            </DialogColumn>
            <BehindEdge />
          </ShotBody>
          <SelectCallout>2. Select file</SelectCallout>
          <SelectArrow width="108" height="108" aria-hidden="true">
            <ArrowShape x1={107} y1={0} x2={0} y2={107} />
          </SelectArrow>
          <OpenCallout>3. Click open</OpenCallout>
          <OpenArrow width="120" height="86" aria-hidden="true">
            <ArrowShape x1={0} y1={85} x2={120} y2={0} />
          </OpenArrow>
        </Shot>
      </Page>
    </>
  );
}
